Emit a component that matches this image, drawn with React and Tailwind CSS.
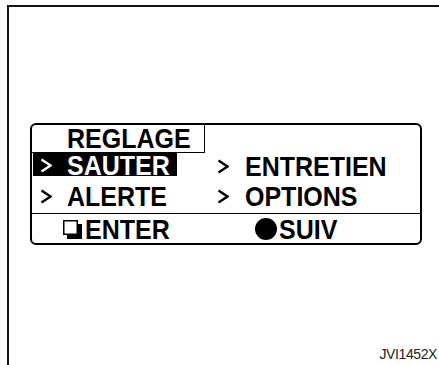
import React from 'react';

const Chevron = ({ className = '' }) => (
  <svg width="12" height="15" viewBox="0 0 12 15" className={`shrink-0 ${className}`}>
    <polyline points="1.5,1.5 10.5,7.5 1.5,13.5" fill="none" stroke="currentColor" strokeWidth="2.4" strokeLinejoin="miter" />
  </svg>
);

const EnterIcon = () => (
  <svg width="19" height="19" viewBox="0 0 19 19" className="shrink-0">
    <rect x="4" y="4" width="15" height="15" fill="#000" />
    <rect x="0.75" y="0.75" width="13.5" height="13.5" fill="#fff" stroke="#000" strokeWidth="1.5" />
  </svg>
);

// tall, slightly condensed display lettering
const Txt = ({ children, className = '' }) => (
  <span className={`inline-block scale-y-110 ${className}`}>{children}</span>
);

export default function App() {
  return (
    <div
      className="w-[439px] h-[365px] bg-white pt-[5px] pl-[7px] overflow-hidden"
      style={{ fontFamily: '"Liberation Sans", Arial, sans-serif' }}
    >
      <div className="h-full border-t-2 border-l-2 border-[#151515] flex flex-col">
        {/* Display panel */}
        <div className="mt-[116px] ml-[21px] w-[392px] h-[122px] border-2 border-black rounded-[6px] flex flex-col text-black font-bold text-[25px]">
          {/* Header */}
          <div className="h-[28px] flex">
            <div className="w-[173px] h-full border-r-[1.5px] border-b border-black pl-[35px] flex items-start">
              <Txt className="leading-[26px]">REGLAGE</Txt>
            </div>
          </div>

          {/* Row 1 */}
          <div className="h-[23px] flex">
            <div className="w-[185px] flex">
              <div className="ml-[1px] w-[144px] h-full bg-black text-white flex items-center pl-[7px]">
                <Chevron className="mt-[2px]" />
                <Txt className="ml-[15px] leading-[23px] mt-[1px]">SAUTER</Txt>
              </div>
            </div>
            <div className="flex items-center mt-[3px]">
              <Chevron />
              <Txt className="ml-[16px] leading-[27px]">ENTRETIEN</Txt>
            </div>
          </div>

          {/* Row 2 */}
          <div className="h-[38px] flex pt-[7px] border-b border-black">
            <div className="w-[185px] pl-[8px] h-[27px] flex items-center">
              <Chevron />
              <Txt className="ml-[15px] leading-[27px]">ALERTE</Txt>
            </div>
            <div className="h-[27px] flex items-center">
              <Chevron />
              <Txt className="ml-[16px] leading-[27px]">OPTIONS</Txt>
            </div>
          </div>

          {/* Bottom keys */}
          <div className="flex-1 flex items-center pt-[1px]">
            <div className="w-[185px] flex items-center pl-[31px]">
              <EnterIcon />
              <Txt className="ml-[3px] leading-[27px]">ENTER</Txt>
            </div>
            <div className="flex items-center pl-[38px]">
              <span className="w-[22px] h-[22px] rounded-full bg-black shrink-0" />
              <Txt className="ml-[2px] leading-[27px]">SUIV</Txt>
            </div>
          </div>
        </div>

        <div className="mt-auto self-end pr-[2px] pb-[4px] text-[14px] leading-none text-[#222] tracking-[-0.4px]">
          JVI1452X
        </div>
      </div>
    </div>
  );
}
